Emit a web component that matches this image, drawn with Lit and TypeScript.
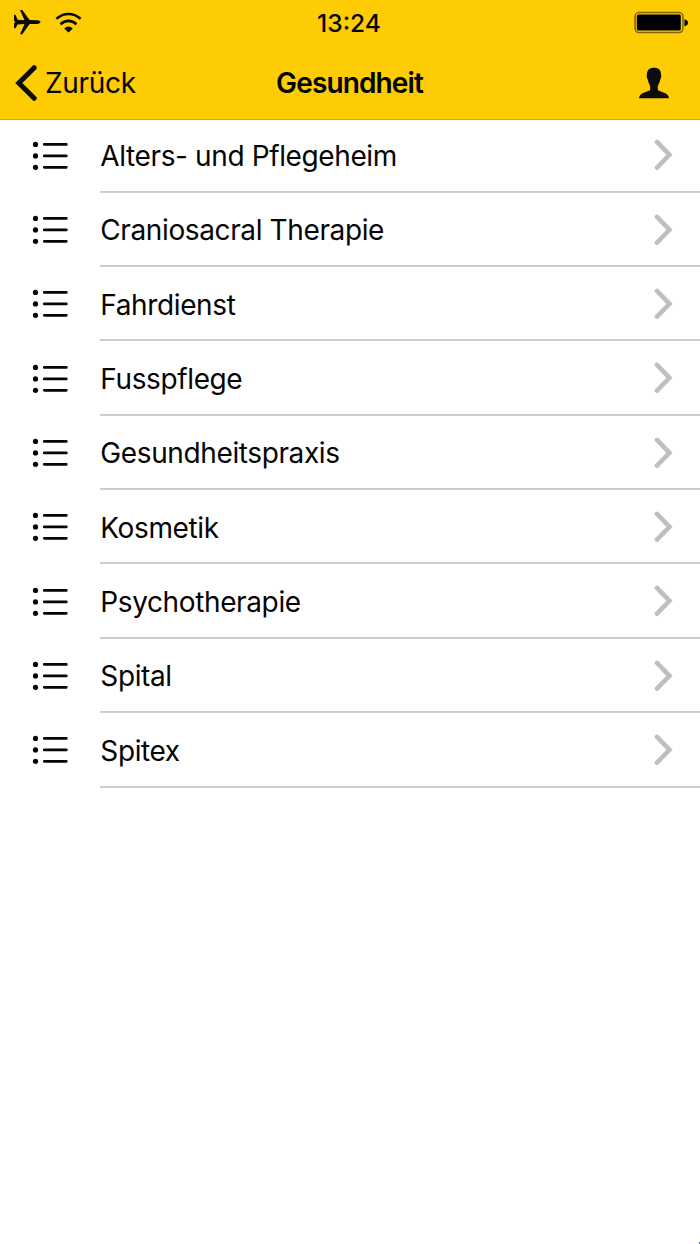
import { LitElement, html, css } from "lit";
import { customElement, property } from "lit/decorators.js";

@customElement("category-row")
class CategoryRow extends LitElement {
  @property() label = "";

  static styles = css`
    :host {
      display: flex;
      height: 74.35px;
      box-sizing: border-box;
    }
    .lead {
      width: 100px;
      flex: none;
      display: flex;
      align-items: center;
      box-sizing: border-box;
      padding: 0 0 0 32px;
    }
    .body {
      flex: 1;
      position: relative;
      display: flex;
      align-items: center;
      justify-content: space-between;
      padding: 0.8px 27px 0 0.3px;
    }
    .rule {
      position: absolute;
      left: 0;
      right: 0;
      bottom: 0;
      width: 100%;
      height: 2px;
    }
    .label {
      font-size: 28px;
      line-height: 34px;
      letter-spacing: -0.38px;
      white-space: nowrap;
    }
    .chevron {
      margin-top: -1.2px;
    }
    svg {
      display: block;
    }
  `;

  render() {
    return html`
      <div class="lead">
        <svg width="36" height="30" viewBox="0 0 36 30">
          <g fill="#050505">
            <circle cx="3.5" cy="3.4" r="2.6" />
            <circle cx="3.5" cy="14.9" r="2.6" />
            <circle cx="3.5" cy="26.3" r="2.6" />
          </g>
          <path d="M12.3 3.4H34.3M12.3 14.9H34.3M12.3 26.3H34.3" stroke="#050505" stroke-width="2.8" stroke-linecap="round" />
        </svg>
      </div>
      <div class="body">
        <span class="label">${this.label}</span>
        <svg class="chevron" width="20" height="32" viewBox="0 0 20 32">
          <path d="M4 2.9L16.5 15.8L4 28.7" fill="none" stroke="#bfbfbf" stroke-width="4.6" stroke-linecap="round" stroke-linejoin="miter" />
        </svg>
        <svg class="rule" viewBox="0 0 600 2" preserveAspectRatio="none">
          <rect y="0.1" width="600" height="1.7" fill="#c4c4ca" />
        </svg>
      </div>
    `;
  }
}

@customElement("app-root")
class AppRoot extends LitElement {
  static styles = css`
    :host {
      display: block;
      position: relative;
      width: 700px;
      height: 1244px;
      overflow: hidden;
      background: #fff;
      color: #050505;
      font-family: Inter, "Liberation Sans", sans-serif;
    }
    header {
      position: relative;
      height: 120px;
      box-sizing: border-box;
      background: #fdcc02;
      border-bottom: 1px solid #d3ac12;
    }
    .status,
    .nav {
      display: grid;
      grid-template-columns: 1fr auto 1fr;
      align-items: center;
    }
    .status {
      height: 46px;
      padding: 0 12px 0 13px;
    }
    .nav {
      height: 73px;
      padding: 0 30px 0 15px;
    }
    .signals,
    .back {
      display: flex;
      align-items: center;
    }
    .signals {
      gap: 14px;
    }
    .time {
      font-size: 24.5px;
      line-height: 30px;
      font-weight: 450;
      letter-spacing: 0;
      margin-left: -3px;
      padding-bottom: 1px;
    }
    .end {
      justify-self: end;
    }
    .back {
      gap: 7px;
      font-size: 28px;
      line-height: 34px;
      letter-spacing: -0.3px;
    }
    .title {
      font-size: 28px;
      line-height: 34px;
      font-weight: 600;
      letter-spacing: -0.88px;
      margin-left: 14px;
      color: #000;
    }
    .list {
      margin-top: -1.6px;
    }
    svg {
      display: block;
    }
    .speck {
      position: absolute;
      right: 0;
      bottom: 0;
      width: 1px;
      height: 2px;
      background: #5961a8;
    }
  `;

  private categories = [
    "Alters- und Pflegeheim",
    "Craniosacral Therapie",
    "Fahrdienst",
    "Fusspflege",
    "Gesundheitspraxis",
    "Kosmetik",
    "Psychotherapie",
    "Spital",
    "Spitex",
  ];

  render() {
    return html`
      <header>
        <div class="status">
          <div class="signals">
            <svg width="28" height="26" viewBox="0 0 28 26">
              <path d="M1 4.8H2.5L4.6 9.8L11.5 10.3L7 0H9.3L16.6 10.1L25 10.3Q27.6 10.8 27.6 12.1Q27.6 13.4 25 13.9L16.6 14.1L9.3 24.2H7L11.5 13.9L4.6 14.4L2.5 18.2H1V13.5L2.2 12.1L1 10.6Z" fill="#0a0a05" />
            </svg>
            <svg width="27" height="22" viewBox="0 0 27 22">
              <g fill="none" stroke="#0a0a05" stroke-width="2.6">
                <path d="M1.4 6.8Q7 2 13.5 2T25.6 6.8" />
                <path d="M5.5 12.2Q9.2 8.9 13.5 8.9T21.5 12.2" />
              </g>
              <path d="M13.5 20.5L9.2 16.5Q13.5 12.7 17.8 16.5Z" fill="#0a0a05" />
            </svg>
          </div>
          <div class="time">13:24</div>
          <svg class="end" width="54" height="24" viewBox="0 0 54 24">
            <rect x="1.1" y="1.6" width="47.8" height="20" rx="4" fill="none" stroke="#85620a" stroke-width="1.5" />
            <rect x="2.8" y="3.6" width="44" height="16" rx="1.5" fill="#000" />
            <path d="M50.4 8.2Q54 8.9 54 11.7T50.4 15.2Z" fill="#0a0a05" />
          </svg>
        </div>
        <div class="nav">
          <div class="back">
            <svg width="23" height="36" viewBox="0 0 23 36">
              <path d="M19.2 2.7L3.8 18L19.2 33.3" fill="none" stroke="#0c0c0c" stroke-width="5" stroke-linecap="round" />
            </svg>
            <span>Zurück</span>
          </div>
          <div class="title">Gesundheit</div>
          <svg class="end" width="32" height="32" viewBox="0 0 32 32">
            <path d="M16 .8C11.4.8 8.8 3.4 9 7.4C8.5 8.2 8.7 11.4 9.7 12.2C10 15.5 11.8 17.4 12.2 19.5V22.5C11.5 25.2 1.4 24.8 1 31.2H31C30.6 24.8 20.5 25.2 19.8 22.5V19.5C20.2 17.4 22 15.5 22.3 12.2C23.3 11.4 23.5 8.2 23 7.4C23.2 3.4 20.6.8 16 .8Z" fill="#0c0c0c" />
          </svg>
        </div>
      </header>
      <main class="list">
        ${this.categories.map((name) => html`<category-row .label=${name}></category-row>`)}
      </main>
      <div class="speck"></div>
    `;
  }
}
